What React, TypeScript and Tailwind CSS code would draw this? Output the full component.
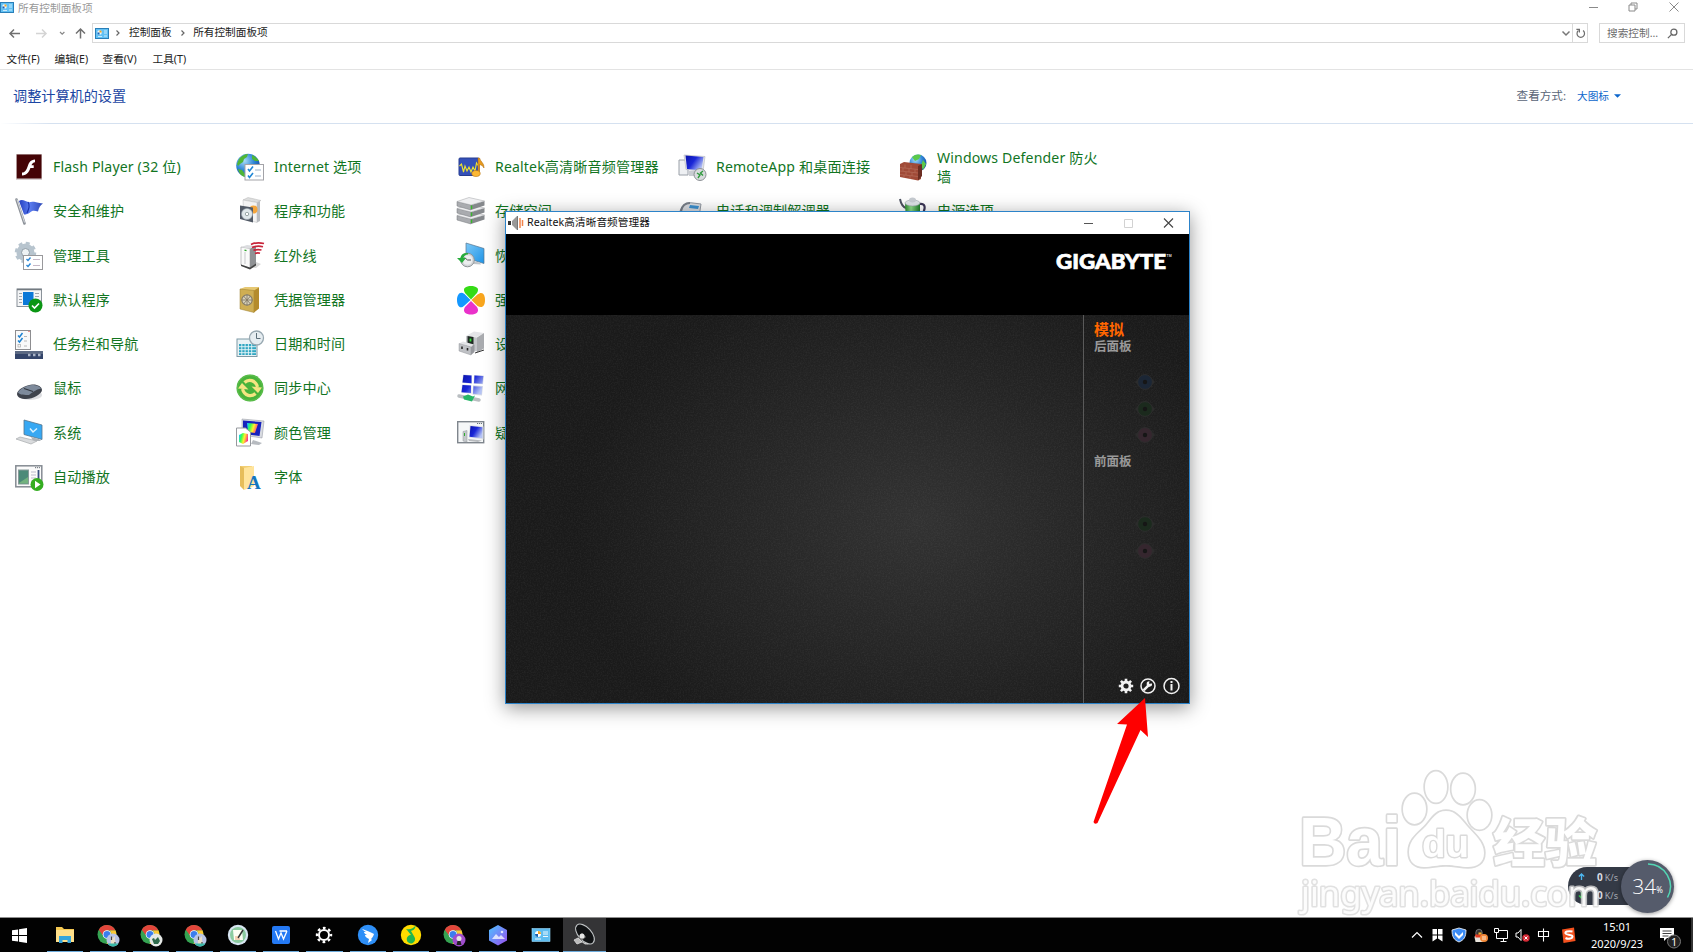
import React from "react";

type Glyph = React.ReactNode;

const ICONS: Record<string, Glyph> = {
  flash: (
    <>
      <rect x="1" y="1" width="26" height="26" fill="#d8d0d0" />
      <rect x="1.7" y="1.5" width="24.8" height="24" fill="#450406" />
      <path d="M20 6.500c-4.500.2-6 3.200-7.200 6.500-1.300 3.600-2.200 6.300-5.800 6.600v2.900c5.200-.1 7-3.800 8.400-7.500h3.300v-2.800h-2.200c.8-1.700 1.600-2.700 3.500-2.900z" fill="#fff" />
    </>
  ),
  internet: (
    <>
      <circle cx="12" cy="12.500" r="11.800" fill="url(#globe)" />
      <path d="M3 6c2-3 6-5 9-5l-1 3-3 2-1 3-3 2-2 2-1-2zM2 16l4 1 3 4v3c-4-1-6-4-7-8zM16 2c3 1 6 4 7 6l-4 0-3-2z" fill="#4fb636" />
      <rect x="9" y="11.500" width="18.500" height="15.500" fill="#fff" stroke="#a3a3a8" />
      <path d="M12 16l1.500 2 3.500-4.500M12 22.500l1.500 2 3.500-4.500" stroke="#1f86d6" strokeWidth="1.600" fill="none" />
      <path d="M19 17h6M19 23h6" stroke="#9db0c8" />
    </>
  ),
  realtek: (
    <>
      <rect x="2" y="5" width="20" height="17.500" rx="1" fill="#3450b8" stroke="#263c91" />
      <path d="M2.500 13l2-2 2 8 1.500-6 2 5 2-4 2 5 2-5 2 4 1.500-8 2 3" stroke="#f0e52d" strokeWidth="1.100" fill="none" />
      <path d="M21 5h1.500c1 4 5 5 4.500 10-1-2-2.500-3-4.500-3.500v8.500h-1.500z" fill="#e79a1e" stroke="#a8660a" strokeWidth=".5" />
      <ellipse cx="19" cy="20.500" rx="4.200" ry="3" fill="#fbb734" stroke="#b9730c" strokeWidth=".6" />
    </>
  ),
  remote: (
    <>
      <path d="M1 7h9v15h-9z" fill="#eef0f3" stroke="#9aa0a8" />
      <path d="M6 2l21 1.500-2 15-17-2z" fill="#e3e5ea" stroke="#b3b6bd" strokeWidth=".6" />
      <path d="M7.500 2.500l18 1.500-2 13.500-14.500-1.500z" fill="url(#screen)" />
      <path d="M10 18h8l2 5h-9z" fill="#c9ccd2" />
      <circle cx="22" cy="21.500" r="6" fill="#d9dbde" stroke="#8d9196" />
      <path d="M19 20l3 2-2 3M25 18l-2.500 2 2.500 2.500" stroke="#2f9a3d" strokeWidth="1.400" fill="none" />
    </>
  ),
  firewall: (
    <>
      <circle cx="19" cy="10" r="8.500" fill="url(#globe)" />
      <path d="M13 4c3-3 7-3 9-2l-2 4-4 2zM24 7l3 4-3 6-2-5z" fill="#5bc94a" />
      <path d="M1 11l4-2 17 2v15l-3 1.500L1 24z" fill="#a04a37" />
      <path d="M21 12l2-1v12l-4 4.500V13z" fill="#6c2e22" />
      <path d="M1 14.500l18 2M1 18l18 2M1 21.500l18 2M6 11.500v3.500M12 12v4M4 15v3M10 16v3M16 16.500v3M7 19v3M13 19.500v3.500M5 22v2.500M11 23v3" stroke="#b87260" strokeWidth=".6" />
    </>
  ),
  flag: (
    <>
      <path d="M1.500 2.500l8 24" stroke="#8d9299" strokeWidth="2.600" strokeLinecap="round" />
      <path d="M2 2.500l7.500 23" stroke="#dfe2e6" strokeWidth=".9" />
      <path d="M4 4c4-3 7 2 12 1 4-.8 6 1 12 1.500-3 2-4 4-5 8-4-1-6-1-8 1-2 1.500-4 2-6 2z" fill="url(#flag)" />
      <path d="M13 5c2 3 1 7-1 11" stroke="#1c35ae" strokeWidth="1.200" fill="none" />
    </>
  ),
  programs: (
    <>
      <path d="M7 3l5-2.500 13 3-4 2z" fill="#dcdddd" stroke="#aaa" strokeWidth=".4" />
      <path d="M7 3l14 2.500v20L8 22z" fill="#f3f3f3" stroke="#b9bbbd" strokeWidth=".5" />
      <path d="M21 5.500l3-1.500v20l-3 1.500z" fill="#b9bcc0" />
      <circle cx="17.500" cy="12.500" r="4" fill="#f4a53c" />
      <path d="M4 8.500l13 2v15L4 22z" fill="#525a66" />
      <circle cx="11" cy="17" r="5.500" fill="#dfe7ea" stroke="#98a5ad" strokeWidth=".6" />
      <circle cx="11" cy="17" r="1.700" fill="#fff" stroke="#788" strokeWidth=".7" />
    </>
  ),
  storage: (
    <>
      {[18.5, 11.5, 4.5].map((y) => (
        <g key={y}>
          <path d={`M0 ${y}l14 3.500v5L0 ${y + 4.5}z`} fill="#a9abaf" stroke="#75787c" strokeWidth=".5" />
          <path d={`M14 ${y + 3.5}l13.500-4v4.500l-13.500 4.500z`} fill="#85888c" />
          <path d={`M0 ${y}l12-4 15.500 3.500-13.500 4z`} fill="#efeff1" stroke="#a0a2a6" strokeWidth=".5" />
          <path d={`M14.500 ${y + 4}v3.500`} stroke="#37b82a" strokeWidth="1.400" />
        </g>
      ))}
    </>
  ),
  phone: (
    <>
      <path d="M2 14C5 7 10 5 15 6l8 1-2 13-18-1z" fill="#d8dbe0" stroke="#9197a0" />
      <path d="M3 14c1-5 4-8 9-8" stroke="#777e88" strokeWidth="2.200" fill="none" />
      <path d="M12 8l9 1-1 3-9-1z" fill="#3b8fce" />
    </>
  ),
  power: (
    <>
      <path d="M1 2c1 5 3 8 6 9" stroke="#4c5160" strokeWidth="2" fill="none" />
      <path d="M20 7c6-1 7 3 4 9" stroke="#3b3556" strokeWidth="2.200" fill="none" />
      <path d="M6 6h15v19H7z" fill="url(#battery)" />
      <ellipse cx="13.500" cy="6" rx="7.500" ry="3" fill="#dfe4e8" stroke="#9aa3ab" strokeWidth=".6" />
      <ellipse cx="13.500" cy="3" rx="3.500" ry="2.500" fill="#c7ccd2" />
    </>
  ),
  admin: (
    <>
      <circle cx="10.500" cy="10.500" r="6.500" fill="none" stroke="#b7c4ce" strokeWidth="5" />
      <circle cx="10.500" cy="10.500" r="9.500" fill="none" stroke="#b7c4ce" strokeWidth="2.500" strokeDasharray="4 3.460" />
      <circle cx="10.500" cy="10.500" r="4" fill="#eef2f4" stroke="#8997a2" />
      <rect x="8.500" y="13.500" width="19" height="14" fill="#fff" stroke="#99999c" />
      <path d="M11.500 17l1.500 1.500 2.500-3M11.500 23l1.500 1.500 2.500-3" stroke="#2a86d4" strokeWidth="1.400" fill="none" />
      <path d="M18 17.500h7M18 23.500h7" stroke="#c6b9c8" />
    </>
  ),
  infrared: (
    <>
      <path d="M9 25l11 1 5-4-5-2z" fill="#d8d8d8" />
      <path d="M5 5l9 1.500v20L5 23z" fill="#fafafa" stroke="#a8a8aa" strokeWidth=".7" />
      <path d="M14 6.500L20 4.500v17.500l-6 4z" fill="#8f9194" />
      <path d="M5 5l6-2 9 1-6 2.500z" fill="#dcdde0" />
      <path d="M5 22.500l9 3 6-4v2l-6 4-9-3.500z" fill="#444" />
      <path d="M9 10v12" stroke="#c7c8ca" />
      <path d="M8.500 8.200l2 .5" stroke="#28a428" strokeWidth="1.300" />
      <path d="M15 2.500c4-2 9-2 13-1M16 5.500c4-1.800 7-1.800 11-.8M17.500 8.500c3-1.300 5-1.300 8-.5M19 11.500c2-.8 3.500-.7 5-.3" stroke="#c8253a" strokeWidth="1.700" fill="none" />
    </>
  ),
  recovery: (
    <>
      <path d="M9 1l18 5.500v15L9 16z" fill="url(#sky)" stroke="#57768f" strokeWidth=".7" />
      <path d="M14 19l9 1.500 1 2-8-.5z" fill="#bfc4c9" />
      <circle cx="10.500" cy="18" r="6.800" fill="#d3d6d9" stroke="#8d9397" />
      <circle cx="10.500" cy="18" r="4.800" fill="#eceeef" />
      <path d="M7.500 15.500l3 2.500h3.500" stroke="#555" fill="none" />
      <path d="M11 11C6 10.500 4 13 3.500 16L0 16l5 5 4-5h-2.500c.5-2 2-3.500 4.500-3.500z" fill="#27ac3b" />
    </>
  ),
  defaults: (
    <>
      <rect x="2" y="3" width="24.500" height="17.500" fill="#f4f5f6" stroke="#8a9299" />
      <path d="M2 3.500h24.500" stroke="#737a80" strokeWidth="1.500" />
      <path d="M4 7.500h3M4 10.500h3M4 13.500h3M4 16.500h3M20 7.500h4M20 10.500h4" stroke="#a0a6ac" />
      <rect x="8" y="6" width="10.500" height="13" fill="#0a78d7" />
      <circle cx="20.500" cy="19.500" r="7" fill="#0b9614" />
      <path d="M17 19.500l2.500 2.500 4.500-4.500" stroke="#fff" strokeWidth="1.700" fill="none" />
    </>
  ),
  vault: (
    <>
      <path d="M4 3l5-2h14v21l-5 4z" fill="#e6c873" />
      <path d="M4 3l14 1.500v22L4 23z" fill="#cfae53" stroke="#9b7c2d" strokeWidth=".5" />
      <path d="M18 4.500l5-3v21l-5 4z" fill="#b48b2c" />
      <circle cx="11" cy="14" r="5.200" fill="#d9d3bd" stroke="#857c68" strokeWidth="1.200" />
      <path d="M11 8.500v11M5.500 14h11M7.500 10l7 8M14.500 10l-7 8" stroke="#857b66" strokeWidth=".9" />
    </>
  ),
  clover: (
    <>
      <path d="M14 13.500L8 7C5 2 9 0 14 0s9 2 6 7z" fill="#35db16" />
      <path d="M14.500 14l6-5.500c5-4 7.500 0 7.500 5.500s-2.500 9-7.500 6z" fill="#f8a51d" />
      <path d="M14 15l6 6c3 5-1 7.500-6 7.500s-9-2.500-6-7.500z" fill="#ea31ca" />
      <path d="M13.500 14l-6 5.500C3 24 0 19.500 0 14s3-9.500 7.500-6z" fill="#1498ff" />
    </>
  ),
  taskbar: (
    <>
      <rect x=".5" y=".5" width="15" height="19" fill="#f9f9f9" stroke="#8d8d90" />
      <path d="M3 5.500l1.500 1.500 3-4M3 10.500l1.500 1.500 3-4" stroke="#1d82d2" strokeWidth="1.500" fill="none" />
      <rect x="3" y="14.500" width="2.500" height="2.500" fill="none" stroke="#aaa" strokeWidth=".7" />
      <path d="M9 6.500h3M9 11h3M9 16h3" stroke="#b8b8b8" />
      <path d="M13.500 1.500h1" stroke="#dd2f2f" />
      <rect x="0" y="21" width="28" height="8" fill="#33446a" />
      <path d="M0 21h28v3H0z" fill="#5b6983" />
      <path d="M13 25h2.500M18 25h2.500M23 25h2.500" stroke="#aab4c6" strokeWidth="2.500" />
    </>
  ),
  clock: (
    <>
      <rect x="1" y="9" width="20" height="17.500" fill="#e9f2f5" stroke="#7f9aa6" />
      <path d="M3 14h17v11H3z" fill="#31a6c2" />
      <path d="M5.800 14v11M9.100 14v11M12.400 14v11M15.700 14v11M3 16.700h17M3 19.700h17M3 22.700h17" stroke="#e9f6f8" strokeWidth=".9" />
      <circle cx="20.500" cy="8" r="7" fill="#e6edf1" stroke="#98a8b1" strokeWidth="1.300" />
      <path d="M20.500 3v5.500h4" stroke="#5b6d78" fill="none" />
    </>
  ),
  device: (
    <>
      <path d="M9 6l8-4.500 10 1.500-7 4z" fill="#e4e5e8" />
      <path d="M9 6l11 1.500v14L9 19z" fill="#c4c6ca" />
      <path d="M20 7.500l7-4.500v15.500l-7 4z" fill="#a9abaf" />
      <path d="M10.500 6l6 1v8.500l-6-1z" fill="#202a24" />
      <path d="M13.500 8.500v3" stroke="#32e13a" strokeWidth="1.800" />
      <path d="M2 13.500l4-2 11 3-3 2.500z" fill="#e3e4e7" />
      <path d="M2 13.500l12 3.500v8L2 21z" fill="#bfc1c5" stroke="#86888d" strokeWidth=".4" />
      <path d="M14 17l3.500-2.500v7.500L14 25z" fill="#96989d" />
      <path d="M5 16.500v2.500M10.500 18v2.500" stroke="#282828" strokeWidth="1.600" />
      <path d="M18 23l9-3" stroke="#333" />
    </>
  ),
  mouse: (
    <>
      <ellipse cx="15" cy="21" rx="12" ry="5" fill="#b9bcc2" opacity=".5" />
      <path d="M2 20c0-4 8-9 15-9.500 5-.5 10 2 10 5.500 0 4-9 9-16 9-5 0-9-2-9-5z" fill="#3e434c" />
      <path d="M3 18.500c2-4 9-7 14-7.500 4 0 8 1.500 9 3.500-5 1-9 4-12 6.500-4 0-9 0-11-2.500z" fill="#7d8a9b" />
      <path d="M9 14.500l9 3" stroke="#30353d" strokeWidth="1.200" />
    </>
  ),
  sync: (
    <>
      <circle cx="14" cy="14" r="13.500" fill="#49b33b" />
      <circle cx="14" cy="14" r="12.700" fill="none" stroke="#66c353" strokeWidth=".8" />
      <path d="M8.500 8.500c4-4 11-2.500 13 4.500" stroke="#f5e582" strokeWidth="3.200" fill="none" />
      <path d="M19.500 19.500c-4 4-11 2.500-13-4.500" stroke="#f5e582" strokeWidth="3.200" fill="none" />
      <path d="M15.500 12.500l10.500 1-4 5.500zM12.500 15.500L2 14.500 6 9z" fill="#f5e582" />
    </>
  ),
  network: (
    <>
      <path d="M6 .5l9 .8v8.500l-10-1zM17 1l10 .8-1 8.500-9.500-.6zM5 10.500l9.500.7v8.500L4 18.500zM16 11.200l10 .8-1 9.500-9.500-.8z" fill="#d7dbe5" />
      <path d="M6.500 1l8 .6v7.700l-9-.8zM17.500 1.500l8.800.6-.8 7.600-8.500-.5zM5.500 11l8.500.6v7.500L4.500 18.200zM16.500 12.200l8.800.6-.8 7.600-8.500-.6z" fill="url(#screen)" />
      <path d="M2 22l20 4" stroke="#b9bec1" strokeWidth="3.500" strokeLinecap="round" />
      <path d="M6 22.500l5-2 5 2 2-1-3 6-8-2z" fill="#26b667" />
    </>
  ),
  system: (
    <>
      <path d="M9 1l18 5v14.500L9 15.500z" fill="#37a8f3" stroke="#56738a" strokeWidth=".8" />
      <path d="M15 9.500l3 3.500 4-3.500" stroke="#d9f2ff" strokeWidth="1.500" fill="none" />
      <path d="M16 18l8 2 2 2h-8z" fill="#aeb3b8" />
      <path d="M1 20l4-2 17 4-6 3z" fill="#d9dbdd" stroke="#a7abae" strokeWidth=".7" />
    </>
  ),
  color: (
    <>
      <path d="M6 0l22 2-2 17-20-3z" fill="#d8dbe1" stroke="#8e939d" strokeWidth=".5" />
      <path d="M7 1.500l18.500 1.500-2 14-16.500-2z" fill="#1722bd" />
      <path d="M11 4l11 1-3 9-7-1z" fill="url(#rainbow)" />
      <path d="M17 21l9 3-3 2-8-1z" fill="#b7bbc0" />
      <path d="M.5 9h9l5 4v14H.5z" fill="#fff" stroke="#96999e" />
      <path d="M3 16l4-2 5 1v7l-5 3-4-2z" fill="url(#rainbow)" />
    </>
  ),
  trouble: (
    <>
      <rect x=".7" y="2.700" width="26" height="21" fill="#f5f7f8" stroke="#7f868d" strokeWidth="1.400" />
      <path d="M20 4.500h5" stroke="#68727b" strokeDasharray="1.200 .8" />
      <path d="M6 12.500l4-1v11.500l-4-1z" fill="#c3c7cb" stroke="#94999f" strokeWidth=".5" />
      <path d="M7.500 14v3" stroke="#2eae2e" />
      <path d="M12.500 6l14 1.500v13L12 18.500z" fill="#dfe2e8" />
      <path d="M13.500 7l12 1.300v11l-13-1.500z" fill="url(#screen)" />
      <path d="M11 20l14 1.500-4 1.500-9-1z" fill="#b7babe" />
    </>
  ),
  autoplay: (
    <>
      <rect x=".8" y="2.800" width="26" height="21" fill="#fbfbfb" stroke="#858b93" strokeWidth="1.500" />
      <path d="M20 4.700h5" stroke="#5f6870" strokeDasharray="1.200 .8" />
      <rect x="3.500" y="7" width="10" height="14" fill="#4c8a78" stroke="#899" />
      <path d="M4 20l9-6v6.500H4z" fill="#72b27e" />
      <path d="M16 9h5M16 12h5M16 15h5M16 18h3" stroke="#bbc" />
      <path d="M23.500 7v9" stroke="#37507f" strokeWidth="1.800" />
      <circle cx="22" cy="21.500" r="6.500" fill="#34ad20" />
      <path d="M20 17.800l5.500 3.700-5.500 3.700z" fill="#fff" />
    </>
  ),
  fonts: (
    <>
      <path d="M4 3h12v21l-8 2z" fill="#f2cf74" />
      <path d="M8 5l10-2v20l-10 4z" fill="#ffe49b" />
      <path d="M4 3l4 2v22l-4-4z" fill="#e6bd5a" />
      <text x="11" y="25.500" fontSize="19" fontWeight="700" fill="#1577bd" fontFamily="Liberation Serif, serif">A</text>
    </>
  ),
};

const COLUMNS: { icon: string; label: string }[][] = [
  [
    { icon: "flash", label: "Flash Player (32 位)" },
    { icon: "flag", label: "安全和维护" },
    { icon: "admin", label: "管理工具" },
    { icon: "defaults", label: "默认程序" },
    { icon: "taskbar", label: "任务栏和导航" },
    { icon: "mouse", label: "鼠标" },
    { icon: "system", label: "系统" },
    { icon: "autoplay", label: "自动播放" },
  ],
  [
    { icon: "internet", label: "Internet 选项" },
    { icon: "programs", label: "程序和功能" },
    { icon: "infrared", label: "红外线" },
    { icon: "vault", label: "凭据管理器" },
    { icon: "clock", label: "日期和时间" },
    { icon: "sync", label: "同步中心" },
    { icon: "color", label: "颜色管理" },
    { icon: "fonts", label: "字体" },
  ],
  [
    { icon: "realtek", label: "Realtek高清晰音频管理器" },
    { icon: "storage", label: "存储空间" },
    { icon: "recovery", label: "恢复" },
    { icon: "clover", label: "强力卸载" },
    { icon: "device", label: "设备管理器" },
    { icon: "network", label: "网络和共享中心" },
    { icon: "trouble", label: "疑难解答" },
  ],
  [
    { icon: "remote", label: "RemoteApp 和桌面连接" },
    { icon: "phone", label: "电话和调制解调器" },
  ],
  [
    { icon: "firewall", label: "Windows Defender 防火墙" },
    { icon: "power", label: "电源选项" },
  ],
];

function Gradients() {
  return (
    <svg className="absolute h-0 w-0" aria-hidden="true">
      <defs>
        <radialGradient id="globe" cx=".35" cy=".3" r=".8">
          <stop offset="0" stopColor="#a9dcf7" />
          <stop offset=".5" stopColor="#2f86d6" />
          <stop offset="1" stopColor="#123f97" />
        </radialGradient>
        <linearGradient id="screen" x1="0" y1="0" x2="1" y2=".6">
          <stop offset="0" stopColor="#0a12a8" />
          <stop offset=".5" stopColor="#1a27d8" />
          <stop offset="1" stopColor="#b5c3f4" />
        </linearGradient>
        <linearGradient id="flag" x1="0" y1="0" x2="1" y2="0">
          <stop offset="0" stopColor="#2540c0" />
          <stop offset=".45" stopColor="#5b7df0" />
          <stop offset="1" stopColor="#2c47b5" />
        </linearGradient>
        <linearGradient id="battery" x1="0" y1="0" x2="1" y2="0">
          <stop offset="0" stopColor="#2c8f2f" />
          <stop offset=".4" stopColor="#8fe08a" />
          <stop offset="1" stopColor="#1f7f2a" />
        </linearGradient>
        <linearGradient id="sky" x1="0" y1="0" x2="1" y2="1">
          <stop offset="0" stopColor="#7cc8f7" />
          <stop offset="1" stopColor="#1d93e6" />
        </linearGradient>
        <linearGradient id="rainbow" x1="0" y1=".2" x2="1" y2=".5">
          <stop offset="0" stopColor="#17c8ff" />
          <stop offset=".3" stopColor="#3dff4a" />
          <stop offset=".6" stopColor="#fff22b" />
          <stop offset="1" stopColor="#ff2a8a" />
        </linearGradient>
        <linearGradient id="photo" x1="0" y1="0" x2="1" y2="1">
          <stop offset="0" stopColor="#4cc3ff" />
          <stop offset="1" stopColor="#9a4df0" />
        </linearGradient>
      </defs>
    </svg>
  );
}

function PanelIcon({ className }: { className: string }) {
  return (
    <svg viewBox="0 0 14 11" className={className}>
      <rect x=".5" y=".5" width="13" height="10" fill="#62c1f4" stroke="#2a7fb8" />
      <circle cx="4.500" cy="4.500" r="2.300" fill="#e9f7ff" />
      <path d="M4.500 4.500V2.200A2.300 2.300 0 0 1 6.800 4.500z" fill="#f5a623" />
      <path d="M4.500 4.500h-2.300a2.300 2.300 0 0 0 2.300 2.300z" fill="#1a62b5" />
      <path d="M9 3h3M9 5h3M3 8.500h4M9 8h3" stroke="#fff" strokeWidth=".8" opacity=".85" />
    </svg>
  );
}

function TitleBar() {
  return (
    <div className="flex h-[22px] items-start text-[10.67px] leading-[16px] text-[#999]">
      <PanelIcon className="mt-[2px] h-[11px] w-[14px]" />
      <span className="ml-[4px]">所有控制面板项</span>
      <svg viewBox="0 0 100 16" className="ml-auto mr-[7px] h-[16px] w-[100px]" fill="none" stroke="#8a8a8a">
        <path d="M3 7.500h9" />
        <path d="M43 5h6v6h-6zM45 5V3h6v6h-2" />
        <path d="M83.500 2.500l9 9M92.500 2.500l-9 9" />
      </svg>
    </div>
  );
}

function AddressRow() {
  return (
    <div className="flex h-[22px] items-center text-[10.67px] text-[#222]">
      <svg viewBox="0 0 92 20" className="h-[20px] w-[92px] shrink-0" fill="none" strokeWidth="1.500">
        <path d="M20 10.500H10M14 6.500l-4 4 4 4" stroke="#707070" />
        <path d="M36 10.500h10M42 6.500l4 4-4 4" stroke="#d4d4d4" />
        <path d="M60 9l2.200 2.200L64.400 9" stroke="#888" strokeWidth="1.200" />
        <path d="M80.500 15.500V6M76 10.500L80.500 6l4.500 4.500" stroke="#707070" />
      </svg>
      <div className="flex h-[20px] flex-1 items-center border border-[#d9d9d9]">
        <PanelIcon className="ml-[2px] h-[11px] w-[14px]" />
        <Chevron className="ml-[6px]" />
        <span className="-mt-[2px] ml-[8px]">控制面板</span>
        <Chevron className="ml-[8px]" />
        <span className="-mt-[2px] ml-[7.500px]">所有控制面板项</span>
        <svg viewBox="0 0 10 10" className="ml-auto mr-[1px] size-[10px]" fill="none" stroke="#777" strokeWidth="1.500">
          <path d="M1.500 3.500L5 7l3.500-3.500" />
        </svg>
        <div className="flex h-full w-[15px] items-center justify-center border-l border-[#d9d9d9]">
          <svg viewBox="0 0 12 12" className="size-[11px]" fill="none" stroke="#6d6d6d" strokeWidth="1.300">
            <path d="M8.800 2.800a4.100 4.100 0 1 1-5 0" />
            <path d="M1.500 1.500h3.300v3.300" />
          </svg>
        </div>
      </div>
      <div className="ml-[11px] mr-[8px] flex h-[20px] w-[86px] items-center border border-[#d9d9d9] pl-[7px] text-[#6d6d6d]">
        <span>搜索控制...</span>
        <svg viewBox="0 0 12 12" className="ml-auto mr-[6px] size-[11px]" fill="none" stroke="#666" strokeWidth="1.400">
          <circle cx="7.500" cy="4.500" r="3.300" />
          <path d="M5 7L1 11" />
        </svg>
      </div>
    </div>
  );
}

function Chevron({ className }: { className: string }) {
  return (
    <svg viewBox="0 0 6 8" className={`h-[8px] w-[6px] ${className}`} fill="none" stroke="#666" strokeWidth="1.200">
      <path d="M1.500 1.500L4 4 1.500 6.500" />
    </svg>
  );
}

function MenuBar() {
  return (
    <div className="flex h-[26px] items-center gap-[14px] border-b border-[#e3e3e3] pl-[6.500px] pt-[5px] text-[10.67px] text-[#222]">
      <span className="w-[34px]">文件(F)</span>
      <span className="w-[34px]">编辑(E)</span>
      <span className="w-[36px]">查看(V)</span>
      <span>工具(T)</span>
    </div>
  );
}

function Heading() {
  return (
    <div>
      <div className="flex h-[53px] items-center">
        <h1 className="-mt-[1px] ml-[13px] text-[14.15px] text-[#1b46a3]">调整计算机的设置</h1>
        <span className="-mt-[2px] ml-auto text-[11.600px] text-[#5a6577]">查看方式:</span>
        <span className="-mt-[2px] ml-[11px] text-[10.67px] text-[#0c66cc]">大图标</span>
        <svg viewBox="0 0 8 4" className="-mt-[2px] ml-[5px] mr-[72px] h-[4px] w-[7px]">
          <path d="M0 0h8L4 4z" fill="#0c66cc" />
        </svg>
      </div>
      <div className="h-px bg-linear-to-r from-white via-[#d5e1f0] via-3% to-[#d5e1f0]" />
    </div>
  );
}

function ItemGrid() {
  return (
    <div className="flex flex-1 items-start pl-[14.5px] pt-[21px]">
      {COLUMNS.map((items) => (
        <ul key={items[0].label} className="w-[221px]">
          {items.map((item) => (
            <li key={item.label} className="flex h-[44.25px] items-center">
              <svg viewBox="0 0 28 28" className="size-[28px] shrink-0 overflow-visible">
                {ICONS[item.icon]}
              </svg>
              <span className="-mt-[1px] ml-[10.500px] w-[170px] text-[14.1px] leading-[19px] tracking-[0.15px] text-[#12751f]">{item.label}</span>
            </li>
          ))}
        </ul>
      ))}
    </div>
  );
}

function Jack({ color }: { color: string }) {
  return (
    <svg viewBox="0 0 20 18" className="ml-[40.500px] block h-[18px] w-[20px]">
      <path d="M0 9l4-4v8zM20 9l-4-4v8z" fill="#2c2c2c" />
      <circle cx="10" cy="9" r="7.400" fill={color} stroke="#2d2d2d" />
      <circle cx="10" cy="9" r="2.200" fill="#161616" />
    </svg>
  );
}

function AudioWindow() {
  return (
    <section className="absolute left-[505px] top-[211px] flex h-[493px] w-[685px] flex-col border border-[#2c83c9] bg-[#1c1c1c] shadow-[0_4px_18px_rgba(0,0,0,0.42)]">
      <header className="flex h-[22px] shrink-0 items-center bg-white text-[10.67px] text-[#111]">
        <svg viewBox="0 0 16 16" className="ml-[2px] size-[16px]">
          <path d="M0 6h3v4H0z" fill="#333" />
          <path d="M4 6l5-5v14L4 10z" fill="#999" />
          <path d="M9.500 1v14" stroke="#777" />
          <path d="M12 3v10M14.500 5v6" stroke="#f0834b" strokeWidth="1.500" />
        </svg>
        <span className="-mt-[2px] ml-[3px] tracking-[0.05px]">Realtek高清晰音频管理器</span>
        <svg viewBox="0 0 104 16" className="-mt-[1px] ml-auto mr-[5px] h-[16px] w-[104px]" fill="none">
          <path d="M4 8.500h9" stroke="#555" />
          <path d="M44.500 4.500h8v8h-8z" stroke="#d2d2d2" />
          <path d="M84 3.500l9 9M93 3.500l-9 9" stroke="#444" strokeWidth="1.100" />
        </svg>
      </header>
      <div className="flex h-[81px] shrink-0 justify-end bg-black pr-[13px] pt-[14px]">
        <svg viewBox="0 0 122 26" className="h-[26px] w-[122px]">
          <text x="2" y="20.800" fontFamily="Lato, sans-serif" fontWeight="900" fontSize="21.500" fill="#fff" stroke="#fff" strokeWidth=".7" textLength="110" lengthAdjust="spacingAndGlyphs">GIGABYTE</text>
          <text x="112.500" y="8.500" fontFamily="Liberation Sans, sans-serif" fontWeight="700" fontSize="3.500" fill="#ddd">TM</text>
        </svg>
      </div>
      <div className="relative flex flex-1 bg-[radial-gradient(ellipse_340px_260px_at_410px_205px,#323232_0%,#272727_45%,#1a1a1a_100%)]">
        <svg className="absolute inset-0 h-full w-full opacity-[0.09]" aria-hidden="true">
          <filter id="grain">
            <feTurbulence type="fractalNoise" baseFrequency="0.7" numOctaves="2" seed="4" />
            <feColorMatrix values="0 0 0 0 0.5  0 0 0 0 0.5  0 0 0 0 0.5  1.6 0 0 0 -0.6" />
          </filter>
          <rect width="100%" height="100%" filter="url(#grain)" />
        </svg>
        <div className="flex-1" />
        <aside className="relative flex w-[106px] flex-col border-l border-[#5a5a5a] pl-[10px] font-bold">
          <p className="mt-[5px] text-[15px] leading-[18px] text-[#ff6600]">模拟</p>
          <p className="pt-[1px] text-[12.500px] leading-[16px] text-[#999]">后面板</p>
          <div className="mt-[18px] flex flex-col gap-[8.500px]">
            <Jack color="#1b2635" />
            <Jack color="#1b2a1d" />
            <Jack color="#35262e" />
          </div>
          <p className="mt-[10px] text-[12.500px] leading-[15px] text-[#999]">前面板</p>
          <div className="mt-[46px] flex flex-col gap-[8.500px]">
            <Jack color="#1b2a1d" />
            <Jack color="#35262e" />
          </div>
          <svg viewBox="0 0 64 18" className="mb-[8px] ml-auto mr-[8px] mt-auto h-[18px] w-[64px]" fill="none" stroke="#f2f2f2">
            <circle cx="9" cy="9" r="4" strokeWidth="2.800" />
            <path d="M9 1.800v3M9 13.200v3M1.800 9h3M13.200 9h3M3.900 3.900l2 2M12.100 12.100l2 2M3.900 14.100l2-2M12.100 5.900l2-2" strokeWidth="2.600" />
            <circle cx="31" cy="9" r="7" strokeWidth="1.500" />
            <path d="M27.300 12.700l4.500-4.500" strokeWidth="2.600" strokeLinecap="round" />
            <path d="M35 6.500a2.700 2.700 0 1 1-2.500-2.200l-.5 2.500z" fill="#f2f2f2" stroke="none" />
            <circle cx="54.500" cy="9" r="7.500" strokeWidth="1.500" />
            <path d="M54.500 7v6.500M54.500 4v2" strokeWidth="2" />
          </svg>
        </aside>
      </div>
    </section>
  );
}

function Arrow() {
  return (
    <svg viewBox="0 0 60 130" className="absolute left-[1090px] top-[696px] h-[130px] w-[60px]">
      <path d="M55 2L58 41 50.500 34 7.500 127q-3 2-4-1L37 28.500 27 28z" fill="#fe0000" />
    </svg>
  );
}

function SpeedWidget() {
  return (
    <div className="absolute left-[1568px] top-[859px] flex h-[54px] w-[106px] items-center">
      <div className="flex h-[38px] w-[72px] flex-col justify-between rounded-l-full bg-[#343a46] py-px pl-[10px] text-[10px] leading-[17px] text-[#d9dce2]">
        <SpeedRow color="#4db8f2" path="M4 8V1M1 4l3-3 3 3" />
        <SpeedRow color="#2fc44a" path="M4 1v7M1 5l3 3 3-3" />
      </div>
      <div className="relative -ml-[19px] flex size-[53px] items-center justify-center rounded-full bg-[#555b6b] shadow-[0_1px_4px_rgba(0,0,0,0.4)]">
        <svg viewBox="0 0 53 53" className="absolute inset-0" fill="none">
          <path d="M27 4A22.500 22.500 0 0 1 46.500 37.500" stroke="#53d6b4" strokeWidth="1.500" />
        </svg>
        <span className="font-['Open_Sans',sans-serif] text-[21px] font-light leading-none text-white">34</span>
        <span className="mt-[8px] text-[8px] leading-none text-white">%</span>
      </div>
    </div>
  );
}

function SpeedRow({ color, path }: { color: string; path: string }) {
  return (
    <div className="flex h-[18px] items-center">
      <svg viewBox="0 0 8 9" className="h-[8px] w-[7px]" fill="none" stroke={color} strokeWidth="1.500">
        <path d={path} />
      </svg>
      <b className="ml-[12px] text-[10px]">0</b>
      <span className="ml-[2px] text-[9px] text-[#a5a9b2]">K/s</span>
    </div>
  );
}

function Watermark() {
  return (
    <svg
      viewBox="0 0 310 150"
      className="absolute left-[1295px] top-[766px] h-[150px] w-[310px]"
      fill="#fff"
      stroke="#dadada"
      strokeWidth="3.400"
      strokeLinejoin="round"
      paintOrder="stroke"
    >
      <g className="blur-[0.4px]">
        <ellipse cx="119.500" cy="43" rx="11.500" ry="15" />
        <ellipse cx="141" cy="21" rx="11" ry="15.500" />
        <ellipse cx="168" cy="23" rx="11.500" ry="15" />
        <ellipse cx="184.500" cy="49" rx="11.500" ry="14.500" />
        <path d="M151 45c10 0 15 8 21 15 8 9 17 16 17 27 0 10-7 14-16 14-8 0-13-2-22-2s-14 2-22 2c-9 0-15-5-15-15 0-12 9-18 17-26 6-7 10-15 20-15z" />
        <g fontFamily="Liberation Sans, Arial, sans-serif" fontWeight="700">
          <text x="4" y="99" fontSize="68" textLength="102" lengthAdjust="spacingAndGlyphs">Bai</text>
          <text x="127" y="91" fontSize="38" fontWeight="700" strokeWidth="2.800" textLength="47" lengthAdjust="spacingAndGlyphs">du</text>
          <text x="198" y="96" fontSize="52" fontWeight="900" fontFamily="Noto Sans CJK SC, sans-serif" textLength="104" lengthAdjust="spacingAndGlyphs">经验</text>
          <text x="6" y="140" fontSize="34" fontWeight="400" fillOpacity=".9" strokeOpacity=".8" fontFamily="Noto Sans, sans-serif" strokeWidth="3.200" textLength="299" lengthAdjust="spacingAndGlyphs">jingyan.baidu.com</text>
        </g>
      </g>
    </svg>
  );
}

function Chrome({ badge }: { badge: Glyph }) {
  return (
    <>
      <circle cx="9" cy="9.500" r="9.500" fill="#35a352" />
      <path d="M.8 4.700A9.500 9.500 0 0 1 17.500 5.500H9a4 4 0 0 0-3.600 5.500z" fill="#e2463b" />
      <path d="M17.500 5.500a9.500 9.500 0 0 1-9 13.500l4-7.500a4 4 0 0 0-1-6z" fill="#fcc934" />
      <circle cx="9" cy="9.500" r="4.300" fill="#fff" />
      <circle cx="9" cy="9.500" r="3.500" fill="#3b7ded" />
      {badge}
    </>
  );
}

const DOG_BADGE = (
  <>
    <circle cx="15" cy="15" r="6.500" fill="#b8c4e6" />
    <path d="M13 11l2 2 2-2v4l1 5h-5z" fill="#e9dfc9" />
    <path d="M13.500 11.500v3.500M17 17v3" stroke="#444" strokeWidth="1.200" />
    <path d="M9.500 18.500a6.500 6.500 0 0 0 11 0z" fill="#39b8a8" />
  </>
);

const APPS: { name: string; art: Glyph; active?: boolean }[] = [
  { name: "explorer", art: (
    <>
      <path d="M1 2h6l2 2h10v13H1z" fill="#f4c852" />
      <path d="M1 5h18v12H1z" fill="#ffe08a" />
      <path d="M4 11h12v7h-3.500v-3h-5v3H4z" fill="#35a5dc" />
    </>
  ) },
  { name: "chrome-1", art: <Chrome badge={DOG_BADGE} /> },
  { name: "chrome-2", art: <Chrome badge={<><circle cx="15" cy="15" r="6.500" fill="#e5e9e6" /><path d="M11 14l2-1 1 2 3-3 2 4-2 3h-4z" fill="#2f6a4b" /></>} /> },
  { name: "chrome-3", art: <Chrome badge={DOG_BADGE} /> },
  { name: "notes", art: (
    <>
      <circle cx="10" cy="10" r="10.200" fill="#d8e6f2" />
      <circle cx="10" cy="10" r="8" fill="#8ccba0" />
      <path d="M5 5h9l1 10H6z" fill="#fdfdf3" />
      <path d="M15 5l-5 8" stroke="#333" strokeWidth="1.500" />
      <path d="M7 12h3M7 14h5" stroke="#e78b54" strokeWidth=".8" />
    </>
  ) },
  { name: "wps", art: (
    <>
      <rect x="1" y="1" width="18" height="18" rx="2" fill="#2479f4" />
      <path d="M4.500 6l3 8 2.500-6 2.500 6 3.500-8M8.500 6h7.500" stroke="#fff" strokeWidth="1.300" fill="none" />
    </>
  ) },
  { name: "settings", art: (
    <g fill="none" stroke="#fff">
      <circle cx="10" cy="10" r="5" strokeWidth="2" />
      <circle cx="10" cy="10" r="7" strokeWidth="2.400" strokeDasharray="2.700 2.800" strokeDashoffset="1.350" />
    </g>
  ) },
  { name: "bird", art: (
    <>
      <circle cx="10" cy="10" r="10.200" fill="#2e8ff7" />
      <path d="M4 4c5 2 9 3 12 5-1 3-2 4-3 5l1 1-4 3 1-4c-3-1-4-3-4-4h2c-2-1-3-2-3-3h2c-2-1-3-2-4-3z" fill="#fff" />
    </>
  ) },
  { name: "music", art: (
    <>
      <circle cx="10" cy="10" r="10.200" fill="#ffdc00" />
      <path d="M5 4c4 1 7 0 10-4-1 4-2 5-5 6l3.500 6a4.200 4.200 0 1 1-3.500-2L6 5z" fill="#1fb64f" />
    </>
  ) },
  { name: "chrome-4", art: <Chrome badge={<><circle cx="15" cy="15" r="6.500" fill="#a04dcc" /><circle cx="15" cy="13.500" r="2.500" fill="#e5e5e5" /><path d="M12.500 20l1-4h3l1 4z" fill="#222" /></>} /> },
  { name: "photos", art: (
    <>
      <path d="M10 0l9 5v10.500l-9 5-9-5V5z" fill="url(#photo)" />
      <path d="M4 14l4-5 3 3 2-2 4 4z" fill="#fff" opacity=".75" />
      <circle cx="14" cy="7" r="1.300" fill="#fff" opacity=".8" />
    </>
  ) },
  { name: "panel", art: (
    <>
      <rect x="1" y="3.500" width="18" height="13" fill="#5fbdf0" stroke="#9bdcff" strokeWidth=".6" />
      <circle cx="7" cy="9" r="3" fill="#fff" />
      <path d="M7 9V6a3 3 0 0 1 3 3z" fill="#f5a623" />
      <path d="M7 9H4a3 3 0 0 0 3 3z" fill="#165fb3" />
      <path d="M12 7h5M12 9h5M12 11.500h5M4 14h6" stroke="#fff" strokeWidth=".9" />
    </>
  ) },
  { name: "speaker", active: true, art: (
    <>
      <ellipse cx="11" cy="9" rx="6.500" ry="12" transform="rotate(-42 11 9)" fill="#101214" stroke="#bfc3c5" strokeWidth="1.100" />
      <path d="M3 14l5-6 4 4-6 5z" fill="#777" />
      <circle cx="8" cy="11" r="2.500" fill="#e5e5e5" />
      <path d="M0 15l4-2 4 4-5 2zM7 16l4 3h3" fill="#bbb" stroke="#ddd" strokeWidth=".8" />
    </>
  ) },
];

function Taskbar() {
  return (
    <footer className="flex h-[35px] shrink-0 items-stretch border-t border-[#8f8f8f] bg-[#020202] text-white">
      <div className="flex w-[43px] items-center pl-[12px] pt-[1px]">
        <svg viewBox="0 0 16 16" className="size-[15px]" fill="#fff">
          <path d="M0 2.500l6.500-1v6H0zM7.500 1.300L16 0v7.500H7.500zM0 8.500h6.500v6L0 13.500zM7.500 8.500H16V16l-8.500-1.300z" />
        </svg>
      </div>
      {APPS.map((app) => (
        <div
          key={app.name}
          className={
            app.active
              ? "flex w-[43.300px] flex-col items-center bg-[#343436]"
              : "flex w-[43.300px] flex-col items-center px-[3.500px]"
          }
        >
          <svg viewBox="0 0 20 20" className="mt-[7px] size-[20px] shrink-0 overflow-visible">{app.art}</svg>
          <div className="mt-auto h-px w-full bg-[#6cabdc]" />
        </div>
      ))}
      <div className="ml-auto flex items-center text-[12px]">
        <svg viewBox="0 0 170 20" className="h-[20px] w-[170px]" fill="none" stroke="#fff">
          <path d="M3 12.500L8 7.500l5 5" strokeWidth="1.200" />
          <path d="M23.500 4H28v5.500h-4.500zM29 4h4.500v5.500H29zM23.500 10.500H28v3L23.500 16.500zM29 10.500h4.500v6L29 13.500z" fill="#fff" stroke="none" />
          <path d="M50 3l7 2c0 7-2 10-7 12-5-2-7-5-7-12z" fill="#3c8cf5" stroke="#fff" strokeWidth=".8" />
          <path d="M46 7l4 4 4-4v3l-4 4-4-4z" fill="#fff" stroke="none" />
          <ellipse cx="70" cy="8" rx="3.300" ry="3.800" fill="#333" stroke="#bbb" strokeWidth=".5" />
          <path d="M65.500 12c0-3 10-3 10 0l-1 5h-8z" fill="#e9e4dc" stroke="none" />
          <path d="M66 9.500h8.500l-1 3h-7z" fill="#e13a20" stroke="none" />
          <path d="M69.500 7.500h3v2h-3z" fill="#f8b52c" stroke="none" />
          <circle cx="75" cy="13" r="4" fill="#f38a3a" stroke="none" />
          <path d="M73 12h4M73 14h4" strokeWidth=".8" />
          <path d="M87.500 5.500h11v8h-11zM91.500 16.500h6M94.500 13.500v3" />
          <path d="M85.500 3.500h4v4h-4z" fill="#020202" />
          <path d="M107 8h2l3-3.500v11l-3-3.500h-2z" />
          <circle cx="117" cy="13" r="3.700" fill="#d52b36" stroke="none" />
          <path d="M115.500 11.500l3 3M118.500 11.500l-3 3" />
          <path d="M153 4.500l12-2 1.500 13.500-12 2z" fill="#f4511e" stroke="none" />
          <path d="M163.500 6.500c-5-1-7.500.5-7 2s7 1 7 3-4 3-7 1.500" strokeWidth="2" />
          <path d="M129.500 6.500h10v5h-10zM134.500 3.500v13" strokeWidth="1.100" />
        </svg>
        <div className="ml-[5px] mr-[1px] w-[66px] text-center text-[11px] leading-[17px]">
          <p>15:01</p>
          <p>2020/9/23</p>
        </div>
        <svg viewBox="0 0 24 24" className="ml-[8px] mr-[8px] mt-[5px] size-[24px]">
          <path d="M1 2h14v10H8l-3 3v-3H1z" fill="#fff" />
          <path d="M3.500 5h9M3.500 7.500h9M3.500 10h6" stroke="#111" strokeWidth=".8" />
          <circle cx="15" cy="15.500" r="6.500" fill="#222" stroke="#777" />
          <text x="12" y="19.500" fontSize="11" fill="#fff" fontFamily="Open Sans, sans-serif">1</text>
        </svg>
      </div>
      <div className="w-[2px] bg-[#333]" />
    </footer>
  );
}

export default function App() {
  return (
    <main className="relative flex h-[952px] w-[1693px] flex-col overflow-hidden bg-white font-['Noto_Sans','Noto_Sans_CJK_SC',sans-serif]">
      <Gradients />
      <TitleBar />
      <AddressRow />
      <MenuBar />
      <Heading />
      <ItemGrid />
      <Taskbar />
      <AudioWindow />
      <Arrow />
      <SpeedWidget />
      <Watermark />
    </main>
  );
}
